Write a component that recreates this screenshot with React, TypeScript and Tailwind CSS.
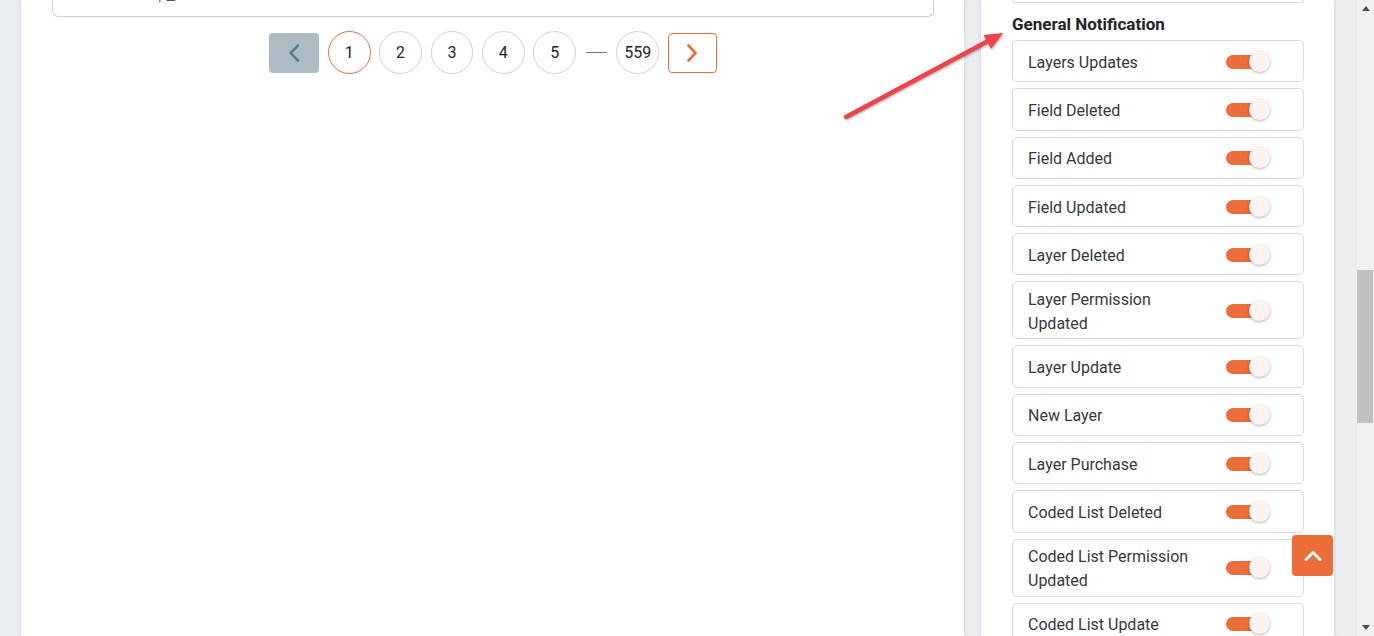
import React from "react";

const items: string[] = [
  "Layers Updates",
  "Field Deleted",
  "Field Added",
  "Field Updated",
  "Layer Deleted",
  "Layer Permission Updated",
  "Layer Update",
  "New Layer",
  "Layer Purchase",
  "Coded List Deleted",
  "Coded List Permission Updated",
  "Coded List Update",
];

function Toggle() {
  return (
    <div className="relative h-[21px] w-[44px] shrink-0">
      <div className="absolute left-0 top-[4px] h-[14px] w-[34px] rounded-full bg-[#ec6c3a]" />
      <div className="absolute right-0 top-0 h-[21px] w-[21px] rounded-full bg-[#fdf3ef] shadow-[0_1px_3px_rgba(0,0,0,0.3)]" />
    </div>
  );
}

function Row({ label }: { label: string }) {
  return (
    <div className="flex min-h-[42.3px] items-center rounded-[5px] border border-[#d6dce1] py-[4px] pl-[15px]">
      <div className="relative top-[1.5px] w-[176px] text-[16px] leading-[24px] text-[#343a40]">{label}</div>
      <div className="ml-[22px]">
        <Toggle />
      </div>
    </div>
  );
}

function PageCircle({ n, active }: { n: string; active?: boolean }) {
  return (
    <div
      className={
        "flex h-[42.7px] w-[42.7px] items-center justify-center rounded-full border text-[16px] text-[#212529] " +
        (active ? "border-[#ec6c3a]" : "border-[#d2d2d2]")
      }
    >
      {n}
    </div>
  );
}

export default function App() {
  return (
    <div className="relative h-[636px] w-[1374px] overflow-hidden bg-[#e9edf0] font-['Roboto',sans-serif]">
      <div className="flex h-full">
        <div className="flex h-full flex-1 pl-[21px]">
          <main className="h-full w-[943px] bg-white pl-[31px] pr-[30px] shadow-[0_0_4px_rgba(0,0,0,0.14)]">
            <div className="relative h-[17px] overflow-hidden rounded-b-[6px] border-x border-b border-[#d0d0d0]">
              <span className="absolute left-[105px] top-[-12px] text-[14px] leading-[16px] text-[#555555]">
                | ⊐
              </span>
            </div>
            <div className="mt-[14px] flex h-[43px] items-center justify-center gap-[8.7px]">
              <div className="flex h-[40px] w-[50px] items-center justify-center rounded-[4px] bg-[#adbcc4]">
                <svg width="12" height="18" viewBox="0 0 12 18" fill="none">
                  <polyline
                    points="10,1.5 2.5,9 10,16.5"
                    stroke="#5d7b8a"
                    strokeWidth="2.6"
                    strokeLinecap="round"
                    strokeLinejoin="round"
                  />
                </svg>
              </div>
              <PageCircle n="1" active />
              <PageCircle n="2" />
              <PageCircle n="3" />
              <PageCircle n="4" />
              <PageCircle n="5" />
              <div className="mx-[1px] h-[1px] w-[21px] bg-[#777777]" />
              <PageCircle n="559" />
              <div className="flex h-[40px] w-[49px] items-center justify-center rounded-[4px] border border-[#ec6c3a] bg-white">
                <svg width="12" height="18" viewBox="0 0 12 18" fill="none">
                  <polyline
                    points="2.5,1.5 9.5,9 2.5,16.5"
                    stroke="#ec6c3a"
                    strokeWidth="2.6"
                    strokeLinecap="round"
                    strokeLinejoin="round"
                  />
                </svg>
              </div>
            </div>
          </main>
          <aside className="ml-[17px] h-full w-[353px] bg-white pl-[31px] pr-[30px] shadow-[0_0_4px_rgba(0,0,0,0.14)]">
            <div className="h-[3px] rounded-b-[5px] border-x border-b border-[#d6dce1]" />
            <h2 className="mb-[4px] mt-[9px] text-[17px] font-bold leading-[24px] text-[#212529]">
              General Notification
            </h2>
            <div className="flex flex-col gap-[6px]">
              {items.map((it) => (
                <Row key={it} label={it} />
              ))}
            </div>
          </aside>
        </div>
        <div className="relative flex h-full w-[17px] flex-col bg-[#f1f1f1]">
          <div className="flex h-[17px] items-center justify-center">
            <svg width="8" height="5" viewBox="0 0 8 5">
              <polygon points="4,0 8,5 0,5" fill="#505050" />
            </svg>
          </div>
          <div className="mt-[253px] h-[153px] w-[16px] bg-[#c1c1c1]" />
          <div className="flex-1" />
          <div className="flex h-[17px] items-center justify-center">
            <svg width="8" height="5" viewBox="0 0 8 5">
              <polygon points="0,0 8,0 4,5" fill="#505050" />
            </svg>
          </div>
        </div>
      </div>

      <svg
        className="pointer-events-none absolute left-0 top-0"
        width="1374"
        height="636"
        style={{ filter: "drop-shadow(1px 1.5px 1px rgba(0,0,0,0.3))" }}
      >
        <line x1="846" y1="117" x2="990" y2="40" stroke="#ef4349" strokeWidth="4.5" strokeLinecap="round" />
        <polygon points="1003,33 983.5,35 991,49" fill="#ef4349" />
      </svg>

      <div className="absolute left-[1292px] top-[535px] flex h-[41px] w-[41px] items-center justify-center rounded-[4px] bg-[#ec6c3a]">
        <svg width="18" height="12" viewBox="0 0 18 12" fill="none">
          <polyline
            points="2,9.5 9,2.5 16,9.5"
            stroke="#ffffff"
            strokeWidth="3"
            strokeLinecap="round"
            strokeLinejoin="round"
          />
        </svg>
      </div>
    </div>
  );
}
